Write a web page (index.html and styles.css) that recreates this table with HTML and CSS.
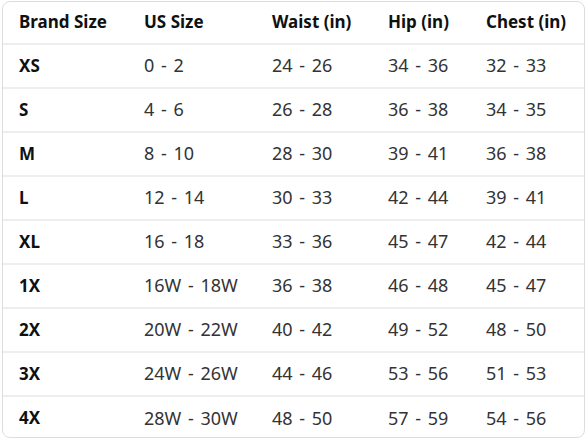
FILE: index.html
```html
<!DOCTYPE html>
<html>
<head>
<meta charset="utf-8">
<link rel="stylesheet" href="styles.css">
</head>
<body>
<div class="card">
<table class="sizes">
<colgroup><col class="c1"><col class="c2"><col class="c3"><col class="c4"><col class="c5"></colgroup>
<thead>
<tr><th>Brand Size</th><th>US Size</th><th>Waist (in)</th><th>Hip (in)</th><th>Chest (in)</th></tr>
</thead>
<tbody>
<tr><td class="b">XS</td><td>0 - 2</td><td>24 - 26</td><td>34 - 36</td><td>32 - 33</td></tr>
<tr><td class="b">S</td><td>4 - 6</td><td>26 - 28</td><td>36 - 38</td><td>34 - 35</td></tr>
<tr><td class="b">M</td><td>8 - 10</td><td>28 - 30</td><td>39 - 41</td><td>36 - 38</td></tr>
<tr><td class="b">L</td><td>12 - 14</td><td>30 - 33</td><td>42 - 44</td><td>39 - 41</td></tr>
<tr><td class="b">XL</td><td>16 - 18</td><td>33 - 36</td><td>45 - 47</td><td>42 - 44</td></tr>
<tr><td class="b">1X</td><td>16W - 18W</td><td>36 - 38</td><td>46 - 48</td><td>45 - 47</td></tr>
<tr><td class="b">2X</td><td>20W - 22W</td><td>40 - 42</td><td>49 - 52</td><td>48 - 50</td></tr>
<tr><td class="b">3X</td><td>24W - 26W</td><td>44 - 46</td><td>53 - 56</td><td>51 - 53</td></tr>
<tr><td class="b">4X</td><td>28W - 30W</td><td>48 - 50</td><td>57 - 59</td><td>54 - 56</td></tr>
</tbody>
</table>
</div>
</body>
</html>
```
FILE: styles.css
```css
html, body { margin: 0; padding: 0; background: #fff; }
body { padding: 1px 2px 0 2px; font-family: "Noto Sans", "Open Sans", sans-serif; color: #0f1111; }
.card {
  width: 581px;
  height: 435px;
  border: 1px solid #dddddd;
  border-radius: 8px;
  overflow: hidden;
}
.sizes { width: 100%; border-collapse: collapse; table-layout: fixed; }
.c1 { width: 125px; } .c2 { width: 128px; } .c3 { width: 116px; } .c4 { width: 98px; }
.sizes th, .sizes td {
  height: 44px;
  padding: 0 0 2px 16px;
  box-sizing: border-box;
  text-align: left;
  font-size: 17px;
  border-bottom: 2px solid #eeeeee;
  white-space: nowrap;
}
.sizes th { height: 42px; }
.sizes tbody tr:last-child td { border-bottom: none; }
.sizes th { font-weight: 700; }
.sizes td { font-weight: 400; color: #333; font-size: 18px; word-spacing: 2px; }
.sizes td.b { font-weight: 700; color: #0f1111; font-size: 17px; word-spacing: 0; }
```
